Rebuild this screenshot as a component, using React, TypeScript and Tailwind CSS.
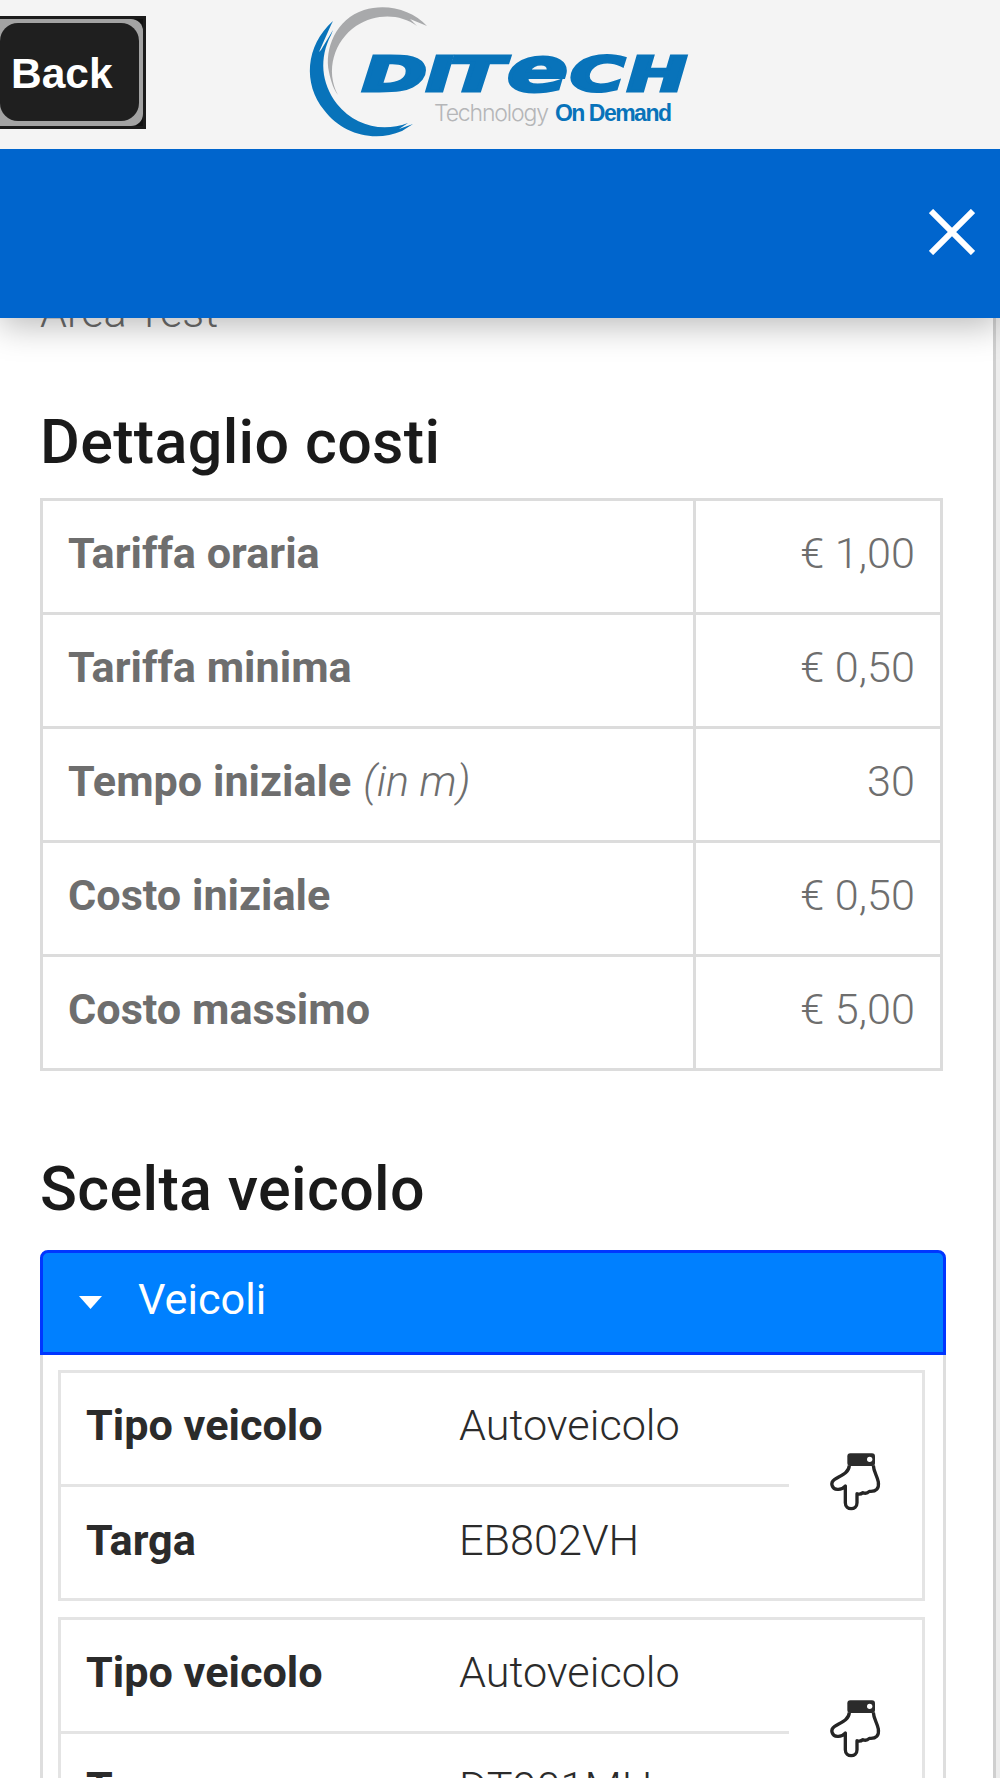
import React, { useState } from 'react';

type Cost = {
  label: string;
  note?: string;
  value: string;
};

type Vehicle = {
  type: string;
  plate: string;
};

const costs: Cost[] = [
  { label: 'Tariffa oraria', value: '€ 1,00' },
  { label: 'Tariffa minima', value: '€ 0,50' },
  { label: 'Tempo iniziale', note: '(in m)', value: '30' },
  { label: 'Costo iniziale', value: '€ 0,50' },
  { label: 'Costo massimo', value: '€ 5,00' },
];

const vehicles: Vehicle[] = [
  { type: 'Autoveicolo', plate: 'EB802VH' },
  { type: 'Autoveicolo', plate: 'DT901MH' },
];

function Logo() {
  return (
    <svg width="420" height="149" viewBox="0 0 420 149" className="block shrink-0">
      <path
        d="M43 21C15 46 13 84 34 110C52 134 84 143 112 131L123 124L109 129L118 123C91 133 64 125 47 104C31 83 29 58 41 35L43 30L31 50L29 52L41 25Z"
        fill="#0873ba"
      />
      <path
        d="M48 95C35 71 44 41 66 26C87 13 110 14 127 26L120 19L137 26C122 10 97 3 74 10C46 19 34 49 39 72C41 82 44 90 48 95Z"
        fill="#a8a9ab"
      />
      <text
        y="90.5"
        fontSize="48.5"
        fill="#0873ba"
        stroke="#0873ba"
        strokeWidth="3"
        className="font-['DejaVu_Sans',sans-serif] font-bold italic"
      >
        <tspan x="72" textLength="65" lengthAdjust="spacingAndGlyphs">D</tspan>
        <tspan x="136" textLength="27" lengthAdjust="spacingAndGlyphs">I</tspan>
        <tspan x="160" textLength="54" lengthAdjust="spacingAndGlyphs">T</tspan>
        <tspan x="217" textLength="61" lengthAdjust="spacingAndGlyphs" fontSize="60">e</tspan>
        <tspan x="280" textLength="55" lengthAdjust="spacingAndGlyphs">C</tspan>
        <tspan x="337" textLength="60" lengthAdjust="spacingAndGlyphs">H</tspan>
      </text>
      <text
        x="144"
        y="120.5"
        textLength="115"
        fontSize="23"
        fill="#b5b6b8"
        className="font-['Inter','Liberation_Sans',sans-serif] font-light"
      >
        Technology
      </text>
      <text
        x="265"
        y="120.5"
        textLength="117"
        fontSize="23"
        fill="#0873ba"
        className="font-['Liberation_Sans',sans-serif] font-bold"
      >
        On Demand
      </text>
    </svg>
  );
}

function HandDown() {
  return (
    <svg width="80" height="80" viewBox="0 0 240 240" className="block" fill="none">
      <path
        d="M88 76C87 98 64 106 44 118C29 128 36 148 52 148C62 149 70 145 76 138V188C76 212 111 212 111 188V161C118 164 124 162 129 158C136 161 144 158 148 154C168 156 178 146 175 126C172 108 161 96 160 76"
        stroke="#252525"
        strokeWidth="10"
        strokeLinejoin="round"
      />
      <rect x="82" y="40" width="83" height="38" rx="9" fill="#2b2b2b" />
      <circle cx="149" cy="58" r="8" fill="#fff" />
    </svg>
  );
}

function VehicleCard({ vehicle }: { vehicle: Vehicle }) {
  return (
    <div className="flex h-[231px] shrink-0 border-[3px] border-[#e4e4e4] text-[#2b2b2b]">
      <div className="w-[728px]">
        <div className="flex h-[114px] items-center border-b-[3px] border-[#e4e4e4] pb-[5px] pl-[25px]">
          <span className="w-[373px] font-bold">Tipo veicolo</span>
          <span className="font-light">{vehicle.type}</span>
        </div>
        <div className="flex h-[111px] items-center pb-[3px] pl-[25px]">
          <span className="w-[373px] font-bold">Targa</span>
          <span className="font-light">{vehicle.plate}</span>
        </div>
      </div>
      <button className="ml-[31px] mt-[67px] h-20 w-20">
        <HandDown />
      </button>
    </div>
  );
}

export default function App() {
  const [open, setOpen] = useState(true);

  return (
    <div className="flex h-[1778px] w-[1000px] flex-col overflow-hidden bg-white font-['Roboto',sans-serif] text-[43.2px] leading-[52px]">
      <header className="relative z-20 flex h-[149px] shrink-0 items-start bg-[#f4f4f4]">
        <button className="mt-4 h-[113px] w-[146px] border-y-[3px] border-r-[3px] border-[#1b1b1b] bg-[#111] font-['Liberation_Sans',sans-serif] font-bold text-white">
          <div className="h-full rounded-r-xl bg-[#a3a3a3] pb-[5px] pr-1 pt-1">
            <div className="flex h-full items-center rounded-[18px] bg-[#1f1f1f] pl-[11px] pt-[3px] text-[42.5px]">
              Back
            </div>
          </div>
        </button>
        <div className="ml-36">
          <Logo />
        </div>
      </header>

      <div className="z-10 flex h-[169px] shrink-0 items-center justify-end bg-[#0065cd] pr-[25px] shadow-[0_8px_32px_rgba(0,0,0,0.27)]">
        <button>
          <svg width="46" height="46" viewBox="0 0 46 46" className="mb-1 block" stroke="#fff" strokeWidth="6">
            <path d="M2 2L44 44M44 2L2 44" />
          </svg>
        </button>
      </div>

      <div className="flex min-h-0 flex-1">
        <main className="w-[993px] pl-10">
          <p className="-mt-[31px] font-light text-[#6c6c6c]">Area Test</p>

          <h2 className="mt-[67px] text-[61px] font-medium leading-[72px] tracking-[0.35px] text-[#1a1a1a]">
            Dettaglio costi
          </h2>
          <div className="mt-5 w-[903px] border-x-[3px] border-t-[3px] border-[#dcdcdc] text-[#6e6e6e]">
            {costs.map(cost => (
              <div key={cost.label} className="flex h-[114px] border-b-[3px] border-[#dcdcdc]">
                <div className="flex w-[653px] items-center border-r-[3px] border-[#dcdcdc] pb-[5px] pl-[25px]">
                  <span className="font-bold">{cost.label}</span>
                  {cost.note && <span className="ml-3 font-light italic">{cost.note}</span>}
                </div>
                <div className="flex flex-1 items-center justify-end pb-[5px] pr-[25px] font-light">
                  {cost.value}
                </div>
              </div>
            ))}
          </div>

          <h2 className="mt-[82px] text-[61px] font-medium leading-[72px] tracking-[0.35px] text-[#1a1a1a]">
            Scelta veicolo
          </h2>
          <div className="mt-[25px] w-[906px]">
            <button
              onClick={() => setOpen(!open)}
              className="flex h-[105px] w-full items-center rounded-t-lg border-[3px] border-[#0036ff] bg-[#0080ff] pb-1.5 pl-9 text-white"
            >
              <svg width="23" height="13" viewBox="0 0 23 13" className="mt-1.5" fill="#fff">
                <path d="M0 0H23L11.5 13Z" />
              </svg>
              <span className="ml-9">Veicoli</span>
            </button>
            {open && (
              <div className="flex flex-col gap-4 border-x-[3px] border-[#dedede] pl-[15px] pr-[18px] pt-[15px]">
                {vehicles.map(vehicle => (
                  <VehicleCard key={vehicle.plate} vehicle={vehicle} />
                ))}
              </div>
            )}
          </div>
        </main>
        <div className="w-[7px] border-l-[3px] border-[#cfcfcf] bg-[#ededed]" />
      </div>
    </div>
  );
}
